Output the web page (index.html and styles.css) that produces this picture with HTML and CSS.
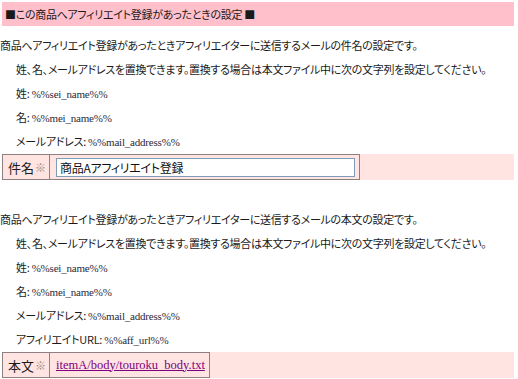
FILE: index.html
```html
<!DOCTYPE html>
<html>
<head>
    <title>アフィリエイト登録設定</title>
    <link rel="stylesheet" href="styles.css">
</head>
<body>

<div class="page">
    <div class="title">■この商品へアフィリエイト登録があったときの設定 ■</div>

    <div class="lines">
        <div class="line">商品へアフィリエイト登録があったときアフィリエイターに送信するメールの件名の設定です。</div>
        <div class="line indent">姓、名、メールアドレスを置換できます。置換する場合は本文ファイル中に次の文字列を設定してください。</div>
        <div class="line indent">姓: <span class="code">%%sei_name%%</span></div>
        <div class="line indent">名: <span class="code">%%mei_name%%</span></div>
        <div class="line indent">メールアドレス: <span class="code">%%mail_address%%</span></div>
    </div>

    <div class="field-row">
        <div class="field-label">件名<span class="mark">※</span></div>
        <div class="field-value">
            <input type="text" class="subject" value="商品Aアフィリエイト登録">
        </div>
    </div>

    <div class="lines second">
        <div class="line">商品へアフィリエイト登録があったときアフィリエイターに送信するメールの本文の設定です。</div>
        <div class="line indent">姓、名、メールアドレスを置換できます。置換する場合は本文ファイル中に次の文字列を設定してください。</div>
        <div class="line indent">姓: <span class="code">%%sei_name%%</span></div>
        <div class="line indent">名: <span class="code">%%mei_name%%</span></div>
        <div class="line indent">メールアドレス: <span class="code">%%mail_address%%</span></div>
        <div class="line indent">アフィリエイトURL: <span class="code">%%aff_url%%</span></div>
    </div>

    <div class="field-row">
        <div class="field-label">本文<span class="mark">※</span></div>
        <div class="field-value">
            <a href="#" class="file-link">itemA/body/touroku_body.txt</a>
        </div>
    </div>
</div>

</body>
</html>
```

FILE: styles.css
```css
body {
    margin: 0;
    background-color: #fff;
    font-family: "Noto Sans CJK JP", sans-serif;
    font-feature-settings: "palt";
    font-size: 11px;
    letter-spacing: -0.3px;
    color: #1a1a1a;
}

.page {
    width: 518px;
    padding-top: 2px;
}

.title {
    margin: 0 4px 0 2px;
    height: 24px;
    line-height: 24px;
    padding-left: 3px;
    letter-spacing: -0.3px;
    background-color: #ffc0cb;
}

.lines {
    padding-top: 7px;
}

.lines.second {
    padding-top: 25px;
}

.line {
    height: 24px;
    line-height: 24px;
    white-space: nowrap;
}

.indent {
    padding-left: 16px;
}

.code {
    font-family: "Liberation Serif", serif;
    font-size: 11px;
    letter-spacing: -0.2px;
    color: #2a2a3a;
}

.field-row {
    display: flex;
    margin: 1px 4px 2px 2px;
    height: 26px;
    background-color: #ffe4e1;
}

.field-label {
    display: flex;
    align-items: center;
    padding: 0 3px 0 5px;
    border: 1px solid #8c8080;
    font-size: 13px;
    letter-spacing: 0;
    color: #1a1a1a;
}

.mark {
    font-size: 11px;
    color: #a08c80;
    margin-left: 1px;
}

.field-value {
    display: flex;
    align-items: center;
    padding: 0 4px 0 6px;
    border: 1px solid #8c8080;
    border-left: none;
}

.subject {
    width: 291px;
    height: 15px;
    margin: 0;
    padding: 1px 3px;
    border: 1px solid #7f9db9;
    background-color: #fff;
    font-family: "Noto Sans CJK JP", sans-serif;
    font-feature-settings: "palt";
    font-size: 12px;
    letter-spacing: -0.3px;
    color: #111;
}

.file-link {
    font-family: "Liberation Serif", serif;
    font-size: 12.5px;
    letter-spacing: 0;
    color: #800080;
}
```
